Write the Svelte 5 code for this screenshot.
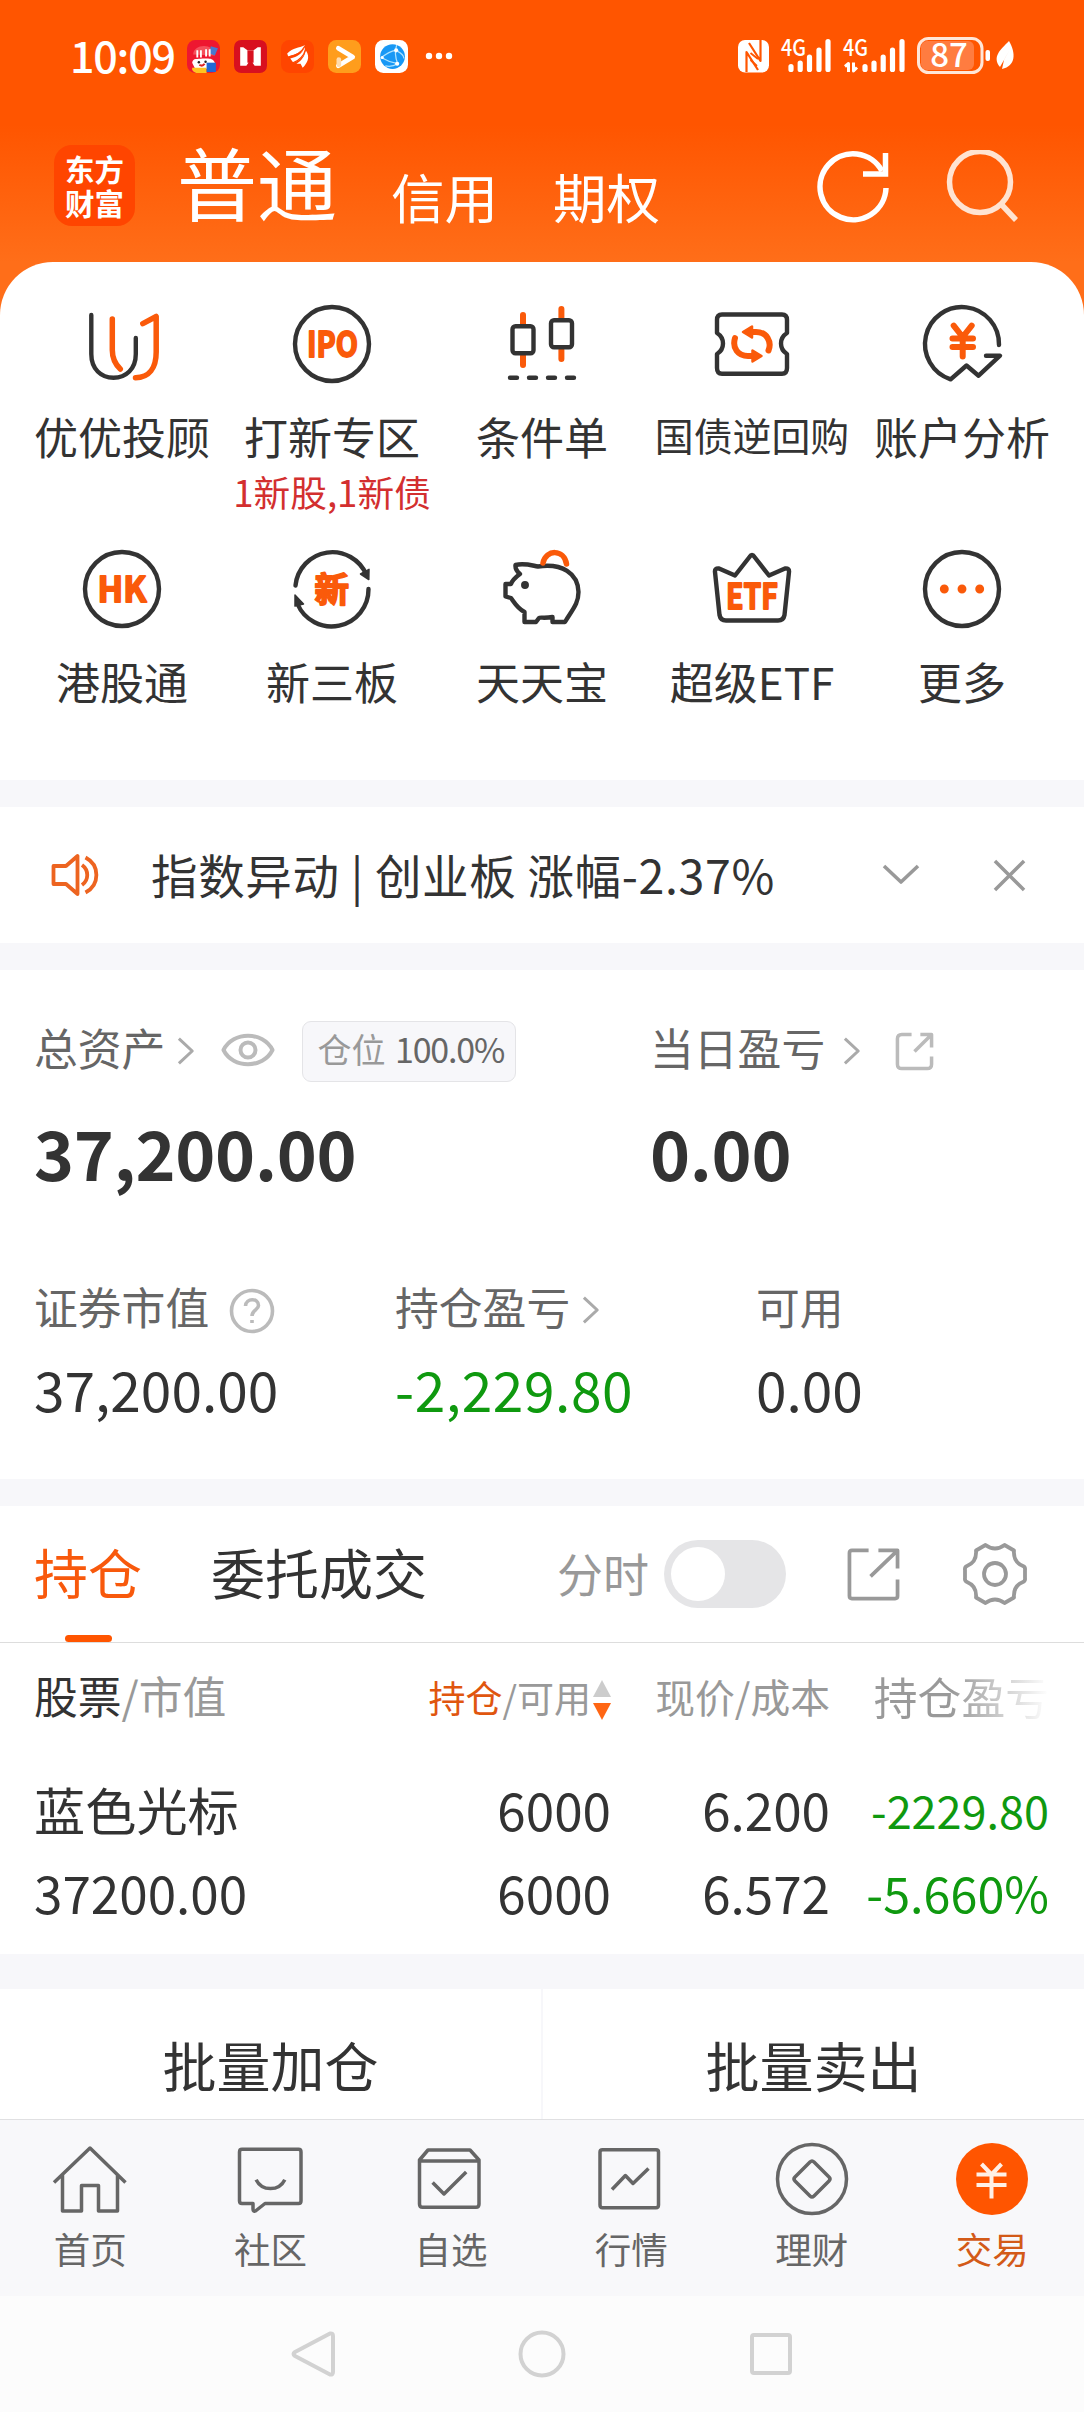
<script>
	const services = [
		{ icon: 'advisor', label: '优优投顾' },
		{ icon: 'ipo', label: '打新专区', note: '1新股,1新债' },
		{ icon: 'candle', label: '条件单' },
		{ icon: 'ticket', label: '国债逆回购' },
		{ icon: 'analysis', label: '账户分析' },
		{ icon: 'hk', label: '港股通' },
		{ icon: 'board', label: '新三板' },
		{ icon: 'piggy', label: '天天宝' },
		{ icon: 'etf', label: '超级ETF' },
		{ icon: 'more', label: '更多' }
	];

	const tabs = [
		{ icon: 'home', label: '首页' },
		{ icon: 'chat', label: '社区' },
		{ icon: 'box', label: '自选' },
		{ icon: 'chart', label: '行情' },
		{ icon: 'coin', label: '理财' },
		{ icon: 'trade', label: '交易', active: true }
	];

	const positions = [
		{
			name: '蓝色光标',
			value: '37200.00',
			amount: '6000',
			usable: '6000',
			price: '6.200',
			cost: '6.572',
			profit: '-2229.80',
			rate: '-5.660%'
		}
	];
</script>

{#snippet arrow()}
	<svg class="arrow" viewBox="0 0 20 30"><path d="M2 2L16 15L2 28" /></svg>
{/snippet}

<div class="app">
	<header>
		<div class="status">
			<span class="time">10:09</span>
			<div class="notifications">
				<svg viewBox="0 0 32 32">
					<rect width="32" height="32" rx="8" fill="#ee1730" />
					<path d="M6 14C6 4 26 2 27 15Z" fill="#f5505c" />
					<path d="M23 6l7 2-3 7-5-2z" fill="#4778cf" />
					<path d="M10 10v7M13.500 10v7M18.500 9v7M22 9v7" stroke="#fff" stroke-width="1.800" />
					<path d="M5 22C6 17 10 19 15 18C20 18 25 17 27 22L24 28H8Z" fill="#fff" />
					<circle cx="11.500" cy="21.500" r="1.200" fill="#222" />
					<circle cx="18" cy="21" r="1.200" fill="#222" />
					<path d="M12 24q3 2 5-1" stroke="#d22" stroke-width="2" fill="none" />
					<path d="M5 27H19V32H9Q6 31 5 29Z" fill="#ffc31f" />
					<rect x="19" y="22" width="9" height="9" fill="#2168d6" />
				</svg>
				<svg viewBox="0 0 32 32">
					<rect width="32" height="32" rx="7" fill="#d8101f" />
					<path d="M6 7H9L13 10H19L23 7H26V25H20L18 22V11H14V22L12 25H6Z" fill="#fff" />
					<path d="M13 10H19V22H13Z" fill="#d8101f" />
				</svg>
				<svg viewBox="0 0 32 32">
					<rect width="32" height="32" rx="8" fill="#ff4500" />
					<path d="M6 13C12 7 17 8 23 5C22 13 14 13 7 16Z" fill="#fff" />
					<path d="M9 18C16 16 20 14 23 7C24 15 19 20 12 22Z" fill="#fff" />
					<path d="M15 23C20 20 23 16 24 10C29 17 25 23 21 27L19 23Z" fill="#fff" />
					<path d="M7 16.500C15 15 20 12 23 6M11 22.500C18 20 22 16 24 9" fill="none" stroke="#ff4500" stroke-width="1.200" />
				</svg>
				<svg viewBox="0 0 32 32">
					<rect width="32" height="32" rx="8" fill="#ff9d1c" />
					<path d="M10 8L24 16.500L10 25" fill="none" stroke="#fff" stroke-width="4.500" stroke-linecap="round" stroke-linejoin="round" />
					<path d="M10.500 19v5" stroke="#ffdcae" stroke-width="4.500" stroke-linecap="round" />
				</svg>
				<svg viewBox="0 0 32 32">
					<rect width="32" height="32" rx="8" fill="#fff" />
					<circle cx="17" cy="16" r="12" fill="#1898f5" />
					<g fill="none" stroke="#aee3ff" stroke-width="1.2">
						<path d="M6 17C10 14 14 11 20 10M21 5C19 11 20 18 22 23M6 17C11 20 16 22 22 23M22 11C26 13 28 16 28 18M22 23C17 26 14 26 10 25" />
					</g>
					<g fill="#fff">
						<circle cx="20.5" cy="10" r="2" />
						<circle cx="7" cy="17" r="1.5" />
						<circle cx="21.500" cy="23" r="2" />
					</g>
				</svg>
			</div>
			<svg class="dots" viewBox="0 0 28 8">
				<circle cx="4" cy="4" r="3.2" /><circle cx="14" cy="4" r="3.2" /><circle cx="24" cy="4" r="3.2" />
			</svg>
			<svg class="signals" viewBox="738 35 278 40">
				<rect x="738" y="40" width="31" height="32.500" rx="7" fill="#fff" />
				<path d="M746.500 72V52L758 70M760.500 40V61L749 43" fill="none" stroke="#ff5500" stroke-width="2.200" />
				<path d="M750.500 53L758 59M750.500 60L757 66" fill="none" stroke="#ff5500" stroke-width="1.800" />
				<g fill="#fff" class="net">
					<text x="781" y="55.500" textLength="25" lengthAdjust="spacingAndGlyphs">4G</text>
					<text x="843" y="55.500" textLength="25" lengthAdjust="spacingAndGlyphs">4G</text>
				</g>
				<g stroke="#fff" stroke-width="5.200" stroke-linecap="round">
					<path d="M791 66.500v3M800.200 63v6.500M809.500 57v12.500M819 50v19.500M828 41.500v28" />
					<path d="M865 66.500v3M874 63v6.500M883.200 57v12.500M892.500 50v19.500M902 41.500v28" />
				</g>
				<path d="M848.500 72V63.500L845 66.500M853.500 62.500V71L857 67.500" fill="none" stroke="#fff" stroke-width="3" />
				<rect x="921" y="41" width="53" height="29" rx="6" fill="#ff7c40" />
				<rect x="918.500" y="38.500" width="63.500" height="34" rx="10" fill="none" stroke="#ffe6d8" stroke-width="3" />
				<rect x="985.500" y="50" width="4.500" height="11" rx="2" fill="#fff" />
				<text class="level" x="949" y="67" text-anchor="middle">87</text>
				<path d="M1009 41C1016 53 1016 66 1002 69L1004 60L1009 51L1000 67C992 57 1000 50 1009 41Z" fill="#fff" />
			</svg>
		</div>
		<nav>
			<div class="logo"><span>东方</span><span>财富</span></div>
			<span class="account current">普通</span>
			<span class="account credit">信用</span>
			<span class="account option">期权</span>
			<svg class="refresh" viewBox="0 0 76 76">
				<path d="M69 39A33 33 0 1 1 65 22" />
				<path d="M68.500 4V25H46" />
			</svg>
			<svg class="search" viewBox="0 0 76 76">
				<circle cx="35" cy="32" r="30.500" /><path d="M56 54L71 70" />
			</svg>
		</nav>
	</header>

	<section class="services">
		{#each services as item (item.icon)}
			<div class="service">
				<svg class="icon" viewBox="-45 -45 90 90">
					{#if item.icon === 'advisor'}
						<path d="M-30.700-29V10C-30.700 25-21 33.700-8.500 33.700S13.800 25 13.800 10V-6" />
						<path class="hot" d="M-9.700-25V6C-9.700 15-7 20-1.700 25M20.800-20.300L34.200-27.500V8C34.200 24 27 33.700 13.500 33.700" />
					{:else if item.icon === 'ipo'}
						<circle r="37" />
						<text x="-25" y="13" textLength="51" lengthAdjust="spacingAndGlyphs">IPO</text>
					{:else if item.icon === 'candle'}
						<path class="hot wide" d="M-19-29V-20M-19 12V21M19.400-35V-26M19.400 6V15" />
						<rect x="-29.500" y="-17.700" width="21" height="27" rx="3" />
						<rect x="9" y="-23.700" width="21" height="27" rx="3" />
						<path d="M-32 33.700h7M-13 33.700h7M6 33.700h7M25 33.700h7" />
					{:else if item.icon === 'ticket'}
						<path d="M-35-24Q-35-29.500-30-29.500H30Q35-29.500 35-24V-11C27-6 27 5 35 10V24Q35 29.700 30 29.700H-30Q-35 29.700-35 24V10C-27 5-27-6-35-11Z" />
						<path class="hot wide" d="M-2-12H4C15-12 20-2 16.500 6.500M-17-6C-20 4-14 12-4 12H1" />
						<path class="fill" d="M-9-12L0-17.500V-6.500ZM9.500 12L.5 6.500V17.500Z" />
					{:else if item.icon === 'analysis'}
						<path d="M37 1A37 37 0 1 0-11.400 35.300L4.500 21.500L16.600 31.700L38 11.700H24" />
						<path class="hot yuan" d="M-8.300-18.300L.7-7L9.700-18.300M.7-7V12.500M-9.500-5.500H11M-9.500 3H11" />
					{:else if item.icon === 'hk'}
						<circle r="37" />
						<text x="-24.500" y="13" textLength="49" lengthAdjust="spacingAndGlyphs">HK</text>
					{:else if item.icon === 'board'}
						<path d="M-36.500-3.500A37 37 0 0 1 34.500-14M36.500 0A37 37 0 0 1-34.500 15" />
						<path class="tip" d="M28.500-15L37-19.700L36.800-9.500ZM-28.500 15L-37 17L-37 6Z" />
						<text x="-17.500" y="13">新</text>
					{:else if item.icon === 'piggy'}
						<path d="M-26.500-24C-18-26-12-24-4-22.500C20-26 36-16 36.500 3C36.500 15 30 21 23 33H10.500V28C2 29.500-2 28-3 29L-6 33H-17.500V23C-25 19-28 13-31 9L-36.500 7.500V-5H-31C-29-10-26-12-22-15Q-27-19-26.500-24Z" />
						<circle class="eye" cx="-17" cy="-4" r="3.200" />
						<path class="hot" d="M1-26C4-40 22-40 24.500-25" />
					{:else if item.icon === 'etf'}
						<path d="M-2.500-32Q0-36 2.500-32L17-13.500L33-20.500Q37.500-21 37-17L32.500 26Q31.500 31.500 26 31.500H-26Q-31.500 31.500-32.500 26L-37-17Q-37.500-21-33-20.500L-17-13.500Z" />
						<text x="-26" y="20" textLength="52" lengthAdjust="spacingAndGlyphs">ETF</text>
					{:else}
						<circle r="37" />
						<g class="fill"><circle cx="-17.700" r="3.200" /><circle r="3.200" /><circle cx="17.700" r="3.200" /></g>
					{/if}
				</svg>
				<span class="label" class:small={item.icon === 'ticket'}>{item.label}</span>
				{#if item.note}
					<span class="note">{item.note}</span>
				{/if}
			</div>
		{/each}
	</section>

	<section class="notice">
		<svg class="speaker" viewBox="0 0 50 44">
			<path d="M2.500 13H15L26.500 3V41L15 31H2.500ZM31 12C38 17 38 27 31 32M34.500 4.500C49 12 49 32 34.500 39.500" />
		</svg>
		<span>指数异动 | 创业板 涨幅-2.37%</span>
		<svg class="down" viewBox="0 0 38 22"><path d="M2 2L19 18L36 2" /></svg>
		<svg class="close" viewBox="0 0 34 34"><path d="M2 2L32 32M32 2L2 32" /></svg>
	</section>

	<section class="assets">
		<div class="totals">
			<div>
				<div class="title">
					总资产 {@render arrow()}
					<svg class="view" viewBox="0 0 54 38">
						<path d="M2.500 19C12 0 42 0 51.500 19C42 38 12 38 2.500 19Z" /><circle cx="27" cy="19" r="7.500" />
					</svg>
					<span class="badge">仓位 <b>100.0%</b></span>
				</div>
				<div class="amount">37,200.00</div>
			</div>
			<div>
				<div class="title">
					<span class="today">当日盈亏</span>
					{@render arrow()}
					<svg class="open" viewBox="0 0 40 40">
						<path d="M17 2.500H7Q2.500 2.500 2.500 7V33Q2.500 37.500 7 37.500H33Q37.500 37.500 37.500 33V25M26 2.500H37.500V16M36 4L20 20" />
					</svg>
				</div>
				<div class="amount">0.00</div>
			</div>
		</div>
		<div class="details">
			<div>
				<div class="title">
					证券市值
					<svg class="help" viewBox="0 0 46 46">
						<circle cx="23" cy="23" r="20.500" />
						<path d="M16.500 18C17 9.500 29.500 10 29.500 17.500C29.500 22 23 22 23 28M23 32v3" />
					</svg>
				</div>
				<div class="value">37,200.00</div>
			</div>
			<div>
				<div class="title">持仓盈亏 {@render arrow()}</div>
				<div class="value down-text">-2,229.80</div>
			</div>
			<div>
				<div class="title">可用</div>
				<div class="value">0.00</div>
			</div>
		</div>
	</section>

	<section class="holdings">
		<div class="bar">
			<span class="tab selected">持仓</span>
			<span class="tab">委托成交</span>
			<span class="minute">分时</span>
			<span class="switch"></span>
			<svg class="share" viewBox="0 0 54 54">
				<path d="M22 2.500H5Q2.500 2.500 2.500 5V49Q2.500 51.500 5 51.500H49Q51.500 51.500 51.500 49V32M32 2.500H51.500V21M50 4L24 29" />
			</svg>
			<svg class="gear" viewBox="-33 -33 66 66">
				<path d="M-9.500-29Q0-22 9.500-29L19-23.500Q18-12 28-8Q30.500-7 30-4V4Q30.500 7 28 8Q18 12 19 23.500L9.500 29Q0 22-9.500 29L-19 23.500Q-18 12-28 8Q-30.500 7-30 4V-4Q-30.500-7-28-8Q-18-12-19-23.500Z" />
				<circle r="11" />
			</svg>
		</div>
		<div class="row head">
			<span class="stock"><b>股票</b>/市值</span>
			<span class="hold">
				<span><b>持仓</b>/可用</span>
				<svg viewBox="0 0 18 40"><path d="M9 0L18 17H0Z" fill="#ccc" /><path d="M9 40L18 23H0Z" fill="#ff6614" /></svg>
			</span>
			<span class="price">现价/成本</span>
			<span class="gain">持仓盈亏</span>
		</div>
		{#each positions as item (item.name)}
			<div class="row">
				<span>{item.name}</span>
				<span>{item.amount}</span>
				<span>{item.price}</span>
				<span class="profit">{item.profit}</span>
			</div>
			<div class="row">
				<span>{item.value}</span>
				<span>{item.usable}</span>
				<span>{item.cost}</span>
				<span class="rate">{item.rate}</span>
			</div>
		{/each}
	</section>

	<section class="batch">
		<button>批量加仓</button>
		<button>批量卖出</button>
	</section>

	<footer>
		{#each tabs as tab (tab.icon)}
			<div class="item" class:active={tab.active}>
				<svg viewBox="-38 -38 76 76">
					{#if tab.icon === 'home'}
						<path d="M-36 3.500L0-31L35.500 3.500M-27.500-4V32H-8.500V6.500H8.500V32H27.500V-4" />
					{:else if tab.icon === 'chat'}
						<path d="M-29-29.700H27.500Q30-29.700 30-27V22Q30 24.500 27.500 24.500H-6L-15.500 32Q-18 33-18 30V24.500H-29Q-31.500 24.500-31.500 22V-27Q-31.500-29.700-29-29.700ZM-14.900.7C-9 12.500 8 12.500 13.800.7" />
					{:else if tab.icon === 'box'}
						<path d="M-31.500-19L-23-29H19L28-19V25Q28 28.300 25 28.300H-28.500Q-31.500 28.300-31.500 25ZM-31.500-18H28M-18.400 3.500L-7 15L15.200-7" />
					{:else if tab.icon === 'chart'}
						<path d="M-28.500-29.300H25Q27.500-29.300 27.500-27V26Q27.500 28.700 25 28.700H-28.500Q-31 28.700-31 26V-27Q-31-29.300-28.500-29.300ZM-19 10.500L-5.600-3.500L2 4.500L17.500-10.500" />
					{:else if tab.icon === 'coin'}
						<circle r="34.500" />
						<path d="M-2-17Q0-19 2-17L17-2Q19 0 17 2L2 17Q0 19-2 17L-17 2Q-19 0-17-2Z" />
					{:else}
						<circle class="disc" r="36" />
						<path class="sign" d="M-10.500-15L-.5-4.500L9.500-15M-.5-4.500V19.500M-15.500-4.500H14.500M-15.500 6H14.500" />
					{/if}
				</svg>
				<span>{tab.label}</span>
			</div>
		{/each}
	</footer>

	<div class="system">
		<svg viewBox="0 0 50 50"><path d="M42 4.500Q45 4 45 7V43Q45 46 42 45.500L7 27Q4 25 7 23Z" /></svg>
		<svg viewBox="0 0 50 50"><circle cx="25" cy="25" r="21.500" /></svg>
		<svg viewBox="0 0 50 50"><rect x="6" y="6" width="38" height="38" rx="2" /></svg>
	</div>
</div>

<style>
	:global(body) {
		background: #f7f7fa;
	}

	.app {
		width: 1084px;
		height: 2412px;
		overflow: hidden;
		display: flex;
		flex-direction: column;
		background: #f7f7fa;
		color: #333;
		font-family: 'Noto Sans CJK SC', sans-serif;
		line-height: 1;
		white-space: nowrap;
	}

	.app > * {
		flex: none;
	}

	svg {
		display: block;
		flex: none;
		fill: none;
		stroke-linejoin: round;
	}

	section {
		box-sizing: border-box;
		background: #fff;
	}

	/* header */
	header {
		height: 322px;
		margin-bottom: -60px;
		background: linear-gradient(#ff5500 0, #ff5500 125px, #ff6e19 262px);
		color: #fff;
	}

	.status {
		display: flex;
		align-items: center;
		height: 112px;
		padding-left: 70px;
	}

	.time {
		width: 117px;
		font-size: 43px;
		font-weight: 500;
		letter-spacing: -1.2px;
		line-height: 108px;
		height: 112px;
	}

	.notifications {
		display: flex;
		gap: 14px;
	}

	.notifications svg {
		width: 33px;
		height: 33px;
	}

	.dots {
		width: 28px;
		height: 8px;
		margin-left: 17px;
		fill: #fff;
	}

	.signals {
		width: 278px;
		height: 40px;
		margin-left: 285px;
		margin-top: -2px;
		overflow: visible;
	}

	.net {
		font-size: 23px;
		font-weight: 500;
	}

	.level {
		fill: #fff;
		font-size: 33px;
		font-weight: 500;
	}

	nav {
		display: flex;
		align-items: flex-start;
		height: 150px;
	}

	.logo {
		display: flex;
		flex-direction: column;
		align-items: center;
		justify-content: center;
		gap: 5px;
		width: 81px;
		height: 81px;
		margin: 33px 0 0 54px;
		border-radius: 18px;
		background: #ff4500;
		font-size: 29.5px;
		font-weight: 700;
	}

	.account {
		font-size: 53.5px;
	}

	.current {
		margin: 28px 0 0 42px;
		font-size: 80px;
	}

	.credit {
		margin: 57px 0 0 54px;
	}

	.option {
		margin: 57px 0 0 55px;
	}

	.refresh,
	.search {
		width: 76px;
		height: 76px;
		stroke: #fff;
		stroke-width: 5.5;
		stroke-linejoin: miter;
	}

	.refresh {
		margin: 37px 0 0 157px;
	}

	.search {
		margin: 38px 0 0 52px;
		stroke: #ffe3d1;
	}

	/* services */
	.services {
		display: grid;
		grid-template-columns: repeat(5, 210px);
		grid-template-rows: 245px 1fr;
		height: 518px;
		padding: 37px 17px 0;
		border-radius: 53px 53px 0 0;
	}

	.service {
		display: flex;
		flex-direction: column;
		align-items: center;
	}

	.icon {
		width: 90px;
		height: 90px;
		stroke: #333;
		stroke-width: 4.4;
		stroke-linecap: round;
	}

	.icon .hot {
		stroke: #fa5a0a;
		stroke-width: 5.5;
	}

	.icon .wide {
		stroke-width: 6;
	}

	.icon .yuan {
		stroke-width: 6;
	}

	.icon .fill {
		fill: #fa5a0a;
		stroke: #fa5a0a;
		stroke-width: 2.5;
	}

	.icon .tip,
	.icon .eye {
		fill: #333;
		stroke-width: 1.5;
	}

	.icon text {
		fill: #fa5a0a;
		stroke: #fa5a0a;
		stroke-width: 1.8;
		font-size: 34.5px;
		font-weight: 700;
	}

	.label {
		margin-top: 24px;
		font-size: 44px;
		line-height: 46px;
	}

	.small {
		font-size: 38.9px;
		line-height: 43px;
	}

	.note {
		margin-top: 14px;
		color: #d32f2f;
		font-size: 36.7px;
	}

	/* notice */
	.notice {
		display: flex;
		align-items: center;
		height: 136px;
		margin: 27px 0;
		padding-left: 51px;
		font-size: 46.5px;
	}

	.notice span {
		width: 731px;
		margin: -2px 0 0 50px;
		letter-spacing: 0.65px;
	}

	.speaker {
		width: 50px;
		height: 44px;
		stroke: #ed6420;
		stroke-width: 3.8;
	}

	.down,
	.close {
		stroke: #999;
		stroke-width: 3.6;
	}

	.down {
		width: 38px;
	}

	.close {
		width: 33px;
		margin-left: 73px;
	}

	/* assets */
	.assets {
		height: 509px;
		padding: 48px 34px 0;
	}

	.totals {
		display: grid;
		grid-template-columns: 616px 1fr;
	}

	.details {
		display: grid;
		grid-template-columns: 361px 361px 1fr;
		margin-top: 78px;
	}

	.title {
		display: flex;
		align-items: center;
		height: 60px;
		color: #666;
		font-size: 43.8px;
	}

	.arrow {
		width: 19px;
		height: 30px;
		margin: 6px 0 0 12px;
		stroke: #aaa;
		stroke-width: 3.2;
	}

	.today + .arrow {
		margin-left: 18px;
	}

	.view {
		width: 54px;
		height: 38px;
		margin: 3px 0 0 25px;
		stroke: #bbb;
		stroke-width: 4;
	}

	.badge {
		box-sizing: border-box;
		width: 214px;
		height: 61px;
		margin: 7px 0 0 27px;
		padding-left: 14px;
		border: 1.5px solid #e4e4e7;
		border-radius: 9px;
		background: #f7f7fa;
		color: #999;
		font-size: 34px;
		line-height: 54px;
	}

	.badge b {
		color: #666;
		font-weight: 400;
		letter-spacing: -1.2px;
		margin-left: 2px;
	}

	.open {
		width: 39px;
		height: 39px;
		margin: 7px 0 0 33px;
		stroke: #bbb;
		stroke-width: 3.6;
	}

	.amount {
		height: 90px;
		margin-top: 29px;
		font-size: 68px;
		font-weight: 700;
		line-height: 90px;
		letter-spacing: -0.3px;
	}

	.help {
		width: 46px;
		height: 46px;
		margin: 7px 0 0 20px;
		stroke: #bbb;
		stroke-width: 3.6;
	}

	.details .title {
		margin-top: 2px;
	}

	.value {
		height: 80px;
		margin-top: 11px;
		font-size: 55px;
		line-height: 80px;
	}

	.down-text,
	.profit,
	.rate {
		color: #0f990f;
	}

	.down-text {
		letter-spacing: 0.6px;
	}

	/* holdings */
	.holdings {
		height: 448px;
		margin-top: 27px;
	}

	.bar {
		display: flex;
		align-items: center;
		box-sizing: border-box;
		height: 137px;
		padding-left: 34px;
		border-bottom: 1.5px solid #ddd;
	}

	.tab {
		position: relative;
		margin-right: 69px;
		font-size: 54px;
		line-height: 131px;
		height: 136px;
	}

	.selected {
		color: #f8590c;
	}

	.selected::after {
		content: '';
		position: absolute;
		left: 31px;
		bottom: 0;
		width: 47px;
		height: 7px;
		border-radius: 4px;
		background: #ff5500;
	}

	.minute {
		margin: -5px 0 0 61px;
		color: #999;
		font-size: 46px;
	}

	.switch {
		box-sizing: border-box;
		width: 122px;
		height: 68px;
		margin-left: 15px;
		padding: 7px;
		border-radius: 34px;
		background: #e5e5e7;
	}

	.switch::before {
		content: '';
		display: block;
		width: 54px;
		height: 54px;
		border-radius: 50%;
		background: #fff;
	}

	.share,
	.gear {
		stroke: #999;
		stroke-width: 3.8;
	}

	.share {
		width: 53px;
		height: 53px;
		margin-left: 61px;
	}

	.gear {
		width: 66px;
		height: 66px;
		margin-left: 62px;
	}

	.row {
		display: grid;
		grid-template-columns: 301px 276px 219px 219px;
		align-items: center;
		height: 83px;
		padding-left: 34px;
		font-size: 51.2px;
		text-align: right;
	}

	.row > :first-child {
		text-align: left;
	}

	.head {
		height: 105px;
		margin-bottom: 20px;
		color: #999;
	}

	.head b {
		color: #333;
		font-weight: 400;
	}

	.stock,
	.gain {
		font-size: 43.8px;
	}

	.gain {
		background: linear-gradient(90deg, #999 55%, #fff 100%);
		background-clip: text;
		color: transparent;
		line-height: 60px;
	}

	.hold {
		display: flex;
		justify-content: flex-end;
		align-items: center;
		gap: 2px;
		margin-top: 4px;
		font-size: 37px;
	}

	.head .hold b {
		color: #e0560f;
	}

	.hold svg {
		width: 18px;
		height: 40px;
		margin-top: 4px;
	}

	.price {
		font-size: 39.8px;
	}

	.profit {
		font-size: 45px;
	}

	.rate {
		font-size: 48.5px;
	}

	/* batch actions */
	.batch {
		display: flex;
		height: 130px;
		margin-top: 35px;
	}

	button {
		flex: 1;
		height: 151px;
		padding: 0;
		border: 0;
		background: none;
		color: #333;
		font: 54px 'Noto Sans CJK SC', sans-serif;
	}

	button + button {
		border-left: 2px solid #f7f7fa;
	}

	/* tab bar */
	footer {
		display: grid;
		grid-template-columns: repeat(6, 180.4px);
		box-sizing: border-box;
		height: 177px;
		border-top: 1.5px solid #e0e0e2;
		background: #f8f8fa;
	}

	.item {
		display: flex;
		flex-direction: column;
		align-items: center;
		color: #666;
		font-size: 36.5px;
	}

	.item svg {
		width: 76px;
		height: 76px;
		margin: 21px 0 14px;
		stroke: #666;
		stroke-width: 3.5;
	}

	.item .disc {
		fill: #ff5500;
		stroke: none;
	}

	.item .sign {
		stroke: #fff0e6;
		stroke-width: 4;
	}

	.active {
		color: #d35a18;
	}

	/* system navigation */
	.system {
		display: flex;
		justify-content: center;
		gap: 179px;
		height: 116px;
		padding-top: 33px;
		box-sizing: border-box;
		background: #fcfcfc;
	}

	.system svg {
		width: 50px;
		height: 50px;
		stroke: #d2d2d2;
		stroke-width: 4;
	}
</style>
